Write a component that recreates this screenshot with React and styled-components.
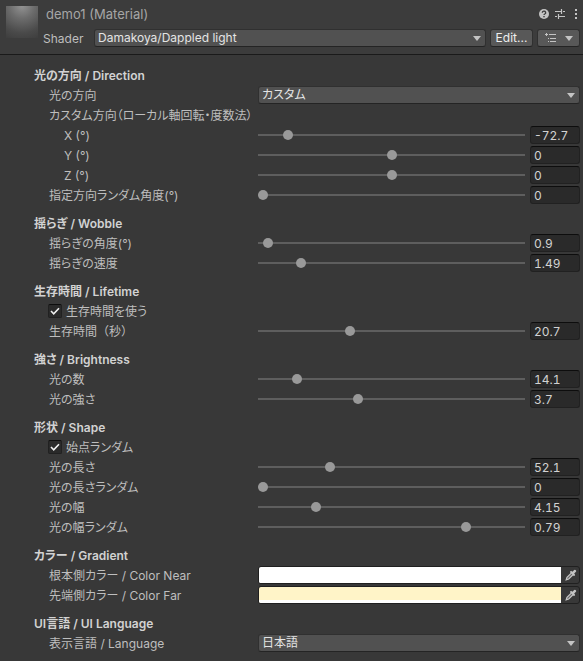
import React, { useId, useState } from "react";
import styled, { createGlobalStyle } from "styled-components";

const GlobalStyle = createGlobalStyle`
  * {
    box-sizing: border-box;
  }
  body {
    margin: 0;
    background: #383838;
    color: #bebebe;
    font-family: Inter, "Noto Sans CJK JP", sans-serif;
    font-size: 12px;
    line-height: 18px;
  }
  input, select, button {
    margin: 0;
    font: inherit;
    color: inherit;
  }
`;

const Header = styled.header`
  display: flex;
  gap: 5px;
  padding: 5px 3px 7px 6px;
  background: #3c3c3c;
  border-bottom: 1px solid #1a1a1a;
`;

const Preview = styled.div`
  width: 32px;
  height: 32px;
  margin-top: 1px;
  background: radial-gradient(circle at 50% 0, #929292 0, #6c6c6c 35%, #4a4a4a 75%, #3e3e3e 100%);
`;

const HeaderMain = styled.div`
  flex: 1;
  min-width: 0;
  display: flex;
  flex-direction: column;
  gap: 6px;
`;

const TitleRow = styled.div`
  display: flex;
  align-items: center;
  justify-content: space-between;
  padding-left: 3px;
`;

const Title = styled.h1`
  margin: 0;
  font-size: 13px;
  font-weight: 400;
  line-height: 18px;
  color: #a6a6a6;
`;

const Tools = styled.div`
  display: flex;
  gap: 4px;
`;

const IconButton = styled.button`
  display: flex;
  padding: 0;
  border: none;
  background: none;
  color: #c4c4c4;
`;

const ShaderRow = styled.div`
  display: flex;
  align-items: center;
  gap: 4px;
`;

const ShaderLabel = styled.label`
  width: 47px;
  height: 18px;
  line-height: 20px;
`;

const SelectWrap = styled.div`
  position: relative;
  flex: 1;
  min-width: 0;
`;

const SelectBox = styled.select`
  display: block;
  width: 100%;
  height: 18px;
  padding: 0 20px 0 3px;
  appearance: none;
  background: #515151;
  border: 1px solid #303030;
  border-bottom-color: #242424;
  border-radius: 3px;
  line-height: 16px;
  color: #e4e4e4;
  font-feature-settings: "palt";
`;

const SelectArrow = styled.svg`
  position: absolute;
  top: 7px;
  right: 5px;
  fill: #c4c4c4;
  pointer-events: none;
`;

const Button = styled.button`
  display: flex;
  align-items: center;
  justify-content: center;
  gap: 8px;
  width: 43px;
  height: 18px;
  padding: 0;
  background: #585858;
  border: 1px solid #303030;
  border-bottom-color: #242424;
  border-radius: 3px;
  line-height: 16px;
  color: #eee;
`;

const Body = styled.main`
  display: flex;
  flex-direction: column;
  gap: 10px;
  padding: 11px 3px 8px 34px;
  font-feature-settings: "palt";
`;

const Section = styled.section`
  display: flex;
  flex-direction: column;
  gap: 2px;
`;

const Heading = styled.h2`
  margin: 0;
  height: 18px;
  font-size: 12px;
  font-weight: 600;
  line-height: 20px;
  color: #d2d2d2;
`;

const Row = styled.div`
  display: grid;
  grid-template-columns: 224px minmax(0, 1fr);
  height: 18px;
`;

const Label = styled.label`
  padding-left: ${(p) => (p.$deep ? 30 : 15)}px;
  line-height: 20px;
  white-space: nowrap;
  font-feature-settings: ${(p) => (p.$fullWidth ? "normal" : '"palt"')};
`;

const Field = styled.div`
  display: flex;
  gap: 5px;
`;

const Range = styled.input`
  flex: 1;
  min-width: 0;
  height: 18px;
  appearance: none;
  background: linear-gradient(#5e5e5e, #5e5e5e) center / 100% 2px no-repeat;

  &::-webkit-slider-thumb {
    appearance: none;
    width: 10px;
    height: 10px;
    border-radius: 50%;
    background: #999;
  }
`;

const NumberBox = styled.input`
  width: 50px;
  height: 18px;
  padding: 1px 3px 0;
  background: #2a2a2a;
  border: 1px solid #212121;
  border-top-color: #0d0d0d;
  border-radius: 3px;
  color: #d2d2d2;
  font-variant-numeric: tabular-nums;
`;

const CheckRow = styled.div`
  display: flex;
  align-items: center;
  gap: 4px;
  height: 18px;
  padding-left: 14px;
`;

const CheckBox = styled.input`
  width: 14px;
  height: 14px;
  appearance: none;
  background: #2a2a2a;
  border: 1px solid #212121;
  border-top-color: #0d0d0d;
  border-radius: 2px;

  &:checked {
    background: #2a2a2a
      url("data:image/svg+xml,%3Csvg xmlns='http://www.w3.org/2000/svg' viewBox='0 0 12 12' fill='none' stroke='%23eee' stroke-width='1.6'%3E%3Cpath d='M2 6l2.7 2.8L10 3.2'/%3E%3C/svg%3E")
      center / 12px 12px no-repeat;
  }
`;

const CheckLabel = styled.label`
  height: 18px;
  line-height: 20px;
`;

const ColorBox = styled.div`
  flex: 1;
  display: flex;
  height: 18px;
  border: 1px solid #202020;
  border-radius: 3px;
  overflow: hidden;
`;

const Swatch = styled.button`
  flex: 1;
  padding: 0;
  border: none;
  border-bottom: 3px solid #fff;
  background: ${(p) => p.$color};
`;

const PickButton = styled(IconButton)`
  width: 18px;
  align-items: center;
  justify-content: center;
`;

function Select({ id, value }) {
  return (
    <SelectWrap>
      <SelectBox id={id} defaultValue={value}>
        <option>{value}</option>
      </SelectBox>
      <SelectArrow width="8" height="5" viewBox="0 0 8 5">
        <path d="M0 0h8L4 5z" />
      </SelectArrow>
    </SelectWrap>
  );
}

function SelectRow({ label, value }) {
  const id = useId();
  return (
    <Row>
      <Label htmlFor={id}>{label}</Label>
      <Field>
        <Select id={id} value={value} />
      </Field>
    </Row>
  );
}

function SliderRow({ label, initial, min = 0, max, deep, fullWidth }) {
  const id = useId();
  const [value, setValue] = useState(initial);
  return (
    <Row>
      <Label htmlFor={id} $deep={deep} $fullWidth={fullWidth}>{label}</Label>
      <Field>
        <Range
          type="range"
          aria-label={label}
          min={min}
          max={max}
          step="any"
          value={value}
          onChange={(e) => setValue(Number(Number(e.target.value).toFixed(2)))}
        />
        <NumberBox id={id} type="text" value={value} onChange={(e) => setValue(e.target.value)} />
      </Field>
    </Row>
  );
}

function Toggle({ label }) {
  const id = useId();
  return (
    <CheckRow>
      <CheckBox id={id} type="checkbox" defaultChecked />
      <CheckLabel htmlFor={id}>{label}</CheckLabel>
    </CheckRow>
  );
}

function ColorRow({ label, color }) {
  const id = useId();
  return (
    <Row>
      <Label htmlFor={id}>{label}</Label>
      <Field>
        <ColorBox>
          <Swatch id={id} type="button" $color={color} />
          <PickButton type="button" aria-label="Pick color">
            <svg width="14" height="14" viewBox="-2 -1 14 14">
              <path d="M6.5 3.8L2 8.300 1.200 10.800 3.700 10 8.200 5.500" fill="#6a6a6a" stroke="currentColor" strokeWidth="1.200" />
              <path d="M4.800 3l1.200-1.200 1.400 1L9.200 1a1.300 1.300 0 0 1 1.800 1.800L9.200 4.600l1 1.400L9 7.200z" fill="currentColor" />
            </svg>
          </PickButton>
        </ColorBox>
      </Field>
    </Row>
  );
}

function App() {
  return (
    <>
      <GlobalStyle />
      <Header>
        <Preview />
        <HeaderMain>
          <TitleRow>
            <Title>demo1 (Material)</Title>
            <Tools>
              <IconButton type="button" aria-label="Help">
                <svg width="12" height="12" viewBox="0 0 12 12">
                  <circle cx="6" cy="6" r="5" fill="currentColor" />
                  <path d="M4.300 4.700a1.700 1.500 0 1 1 2.500 1.300q-.8.4-.8 1.100" fill="none" stroke="#3c3c3c" strokeWidth="1.300" />
                  <rect x="5.300" y="8" width="1.400" height="1.300" fill="#3c3c3c" />
                </svg>
              </IconButton>
              <IconButton type="button" aria-label="Presets">
                <svg width="12" height="12" viewBox="0 0 12 12" stroke="currentColor" fill="none">
                  <path d="M1 3.500h6M9 3.500h2M7.500 1v5M1 8.500h2M5 8.500h6M4.500 6v5" strokeWidth="1.200" />
                </svg>
              </IconButton>
              <IconButton type="button" aria-label="More">
                <svg width="10" height="12" viewBox="0 0 10 12" fill="currentColor">
                  <path d="M5 1h2v2H5zM5 5h2v2H5zM5 9h2v2H5z" />
                </svg>
              </IconButton>
            </Tools>
          </TitleRow>
          <ShaderRow>
            <ShaderLabel htmlFor="shader">Shader</ShaderLabel>
            <Select id="shader" value="Damakoya/Dappled light" />
            <Button type="button">Edit...</Button>
            <Button type="button" aria-label="Shader list">
              <svg width="12" height="12" viewBox="0 0 12 12" stroke="#c4c4c4" fill="none">
                <path d="M0 2.500h3M1.500 1v3M4 2.500h7M3 6.500h1M5 6.500h6M3 9.500h1M5 9.500h6" />
              </svg>
              <svg width="8" height="5" viewBox="0 0 8 5" fill="#c4c4c4">
                <path d="M0 0h8L4 5z" />
              </svg>
            </Button>
          </ShaderRow>
        </HeaderMain>
      </Header>
      <Body>
        <Section>
          <Heading>光の方向 / Direction</Heading>
          <SelectRow label="光の方向" value="カスタム" />
          <Row>
            <Label as="span">カスタム方向（ローカル軸回転・度数法）</Label>
          </Row>
          <SliderRow deep label="X (°)" initial={-72.7} min={-90} max={90} />
          <SliderRow deep label="Y (°)" initial={0} min={-90} max={90} />
          <SliderRow deep label="Z (°)" initial={0} min={-90} max={90} />
          <SliderRow label="指定方向ランダム角度(°)" initial={0} max={180} />
        </Section>
        <Section>
          <Heading>揺らぎ / Wobble</Heading>
          <SliderRow label="揺らぎの角度(°)" initial={0.9} max={45} />
          <SliderRow label="揺らぎの速度" initial={1.49} max={10} />
        </Section>
        <Section>
          <Heading>生存時間 / Lifetime</Heading>
          <Toggle label="生存時間を使う" />
          <SliderRow fullWidth label="生存時間（秒）" initial={20.7} min={0.5} max={60} />
        </Section>
        <Section>
          <Heading>強さ / Brightness</Heading>
          <SliderRow label="光の数" initial={14.1} min={1} max={100} />
          <SliderRow label="光の強さ" initial={3.7} max={10} />
        </Section>
        <Section>
          <Heading>形状 / Shape</Heading>
          <Toggle label="始点ランダム" />
          <SliderRow label="光の長さ" initial={52.1} max={200} />
          <SliderRow label="光の長さランダム" initial={0} max={1} />
          <SliderRow label="光の幅" initial={4.15} max={20} />
          <SliderRow label="光の幅ランダム" initial={0.79} max={1} />
        </Section>
        <Section>
          <Heading>カラー / Gradient</Heading>
          <ColorRow label="根本側カラー / Color Near" color="#fff" />
          <ColorRow label="先端側カラー / Color Far" color="#fff4c8" />
        </Section>
        <Section>
          <Heading>UI言語 / UI Language</Heading>
          <SelectRow label="表示言語 / Language" value="日本語" />
        </Section>
      </Body>
    </>
  );
}

export default App;
